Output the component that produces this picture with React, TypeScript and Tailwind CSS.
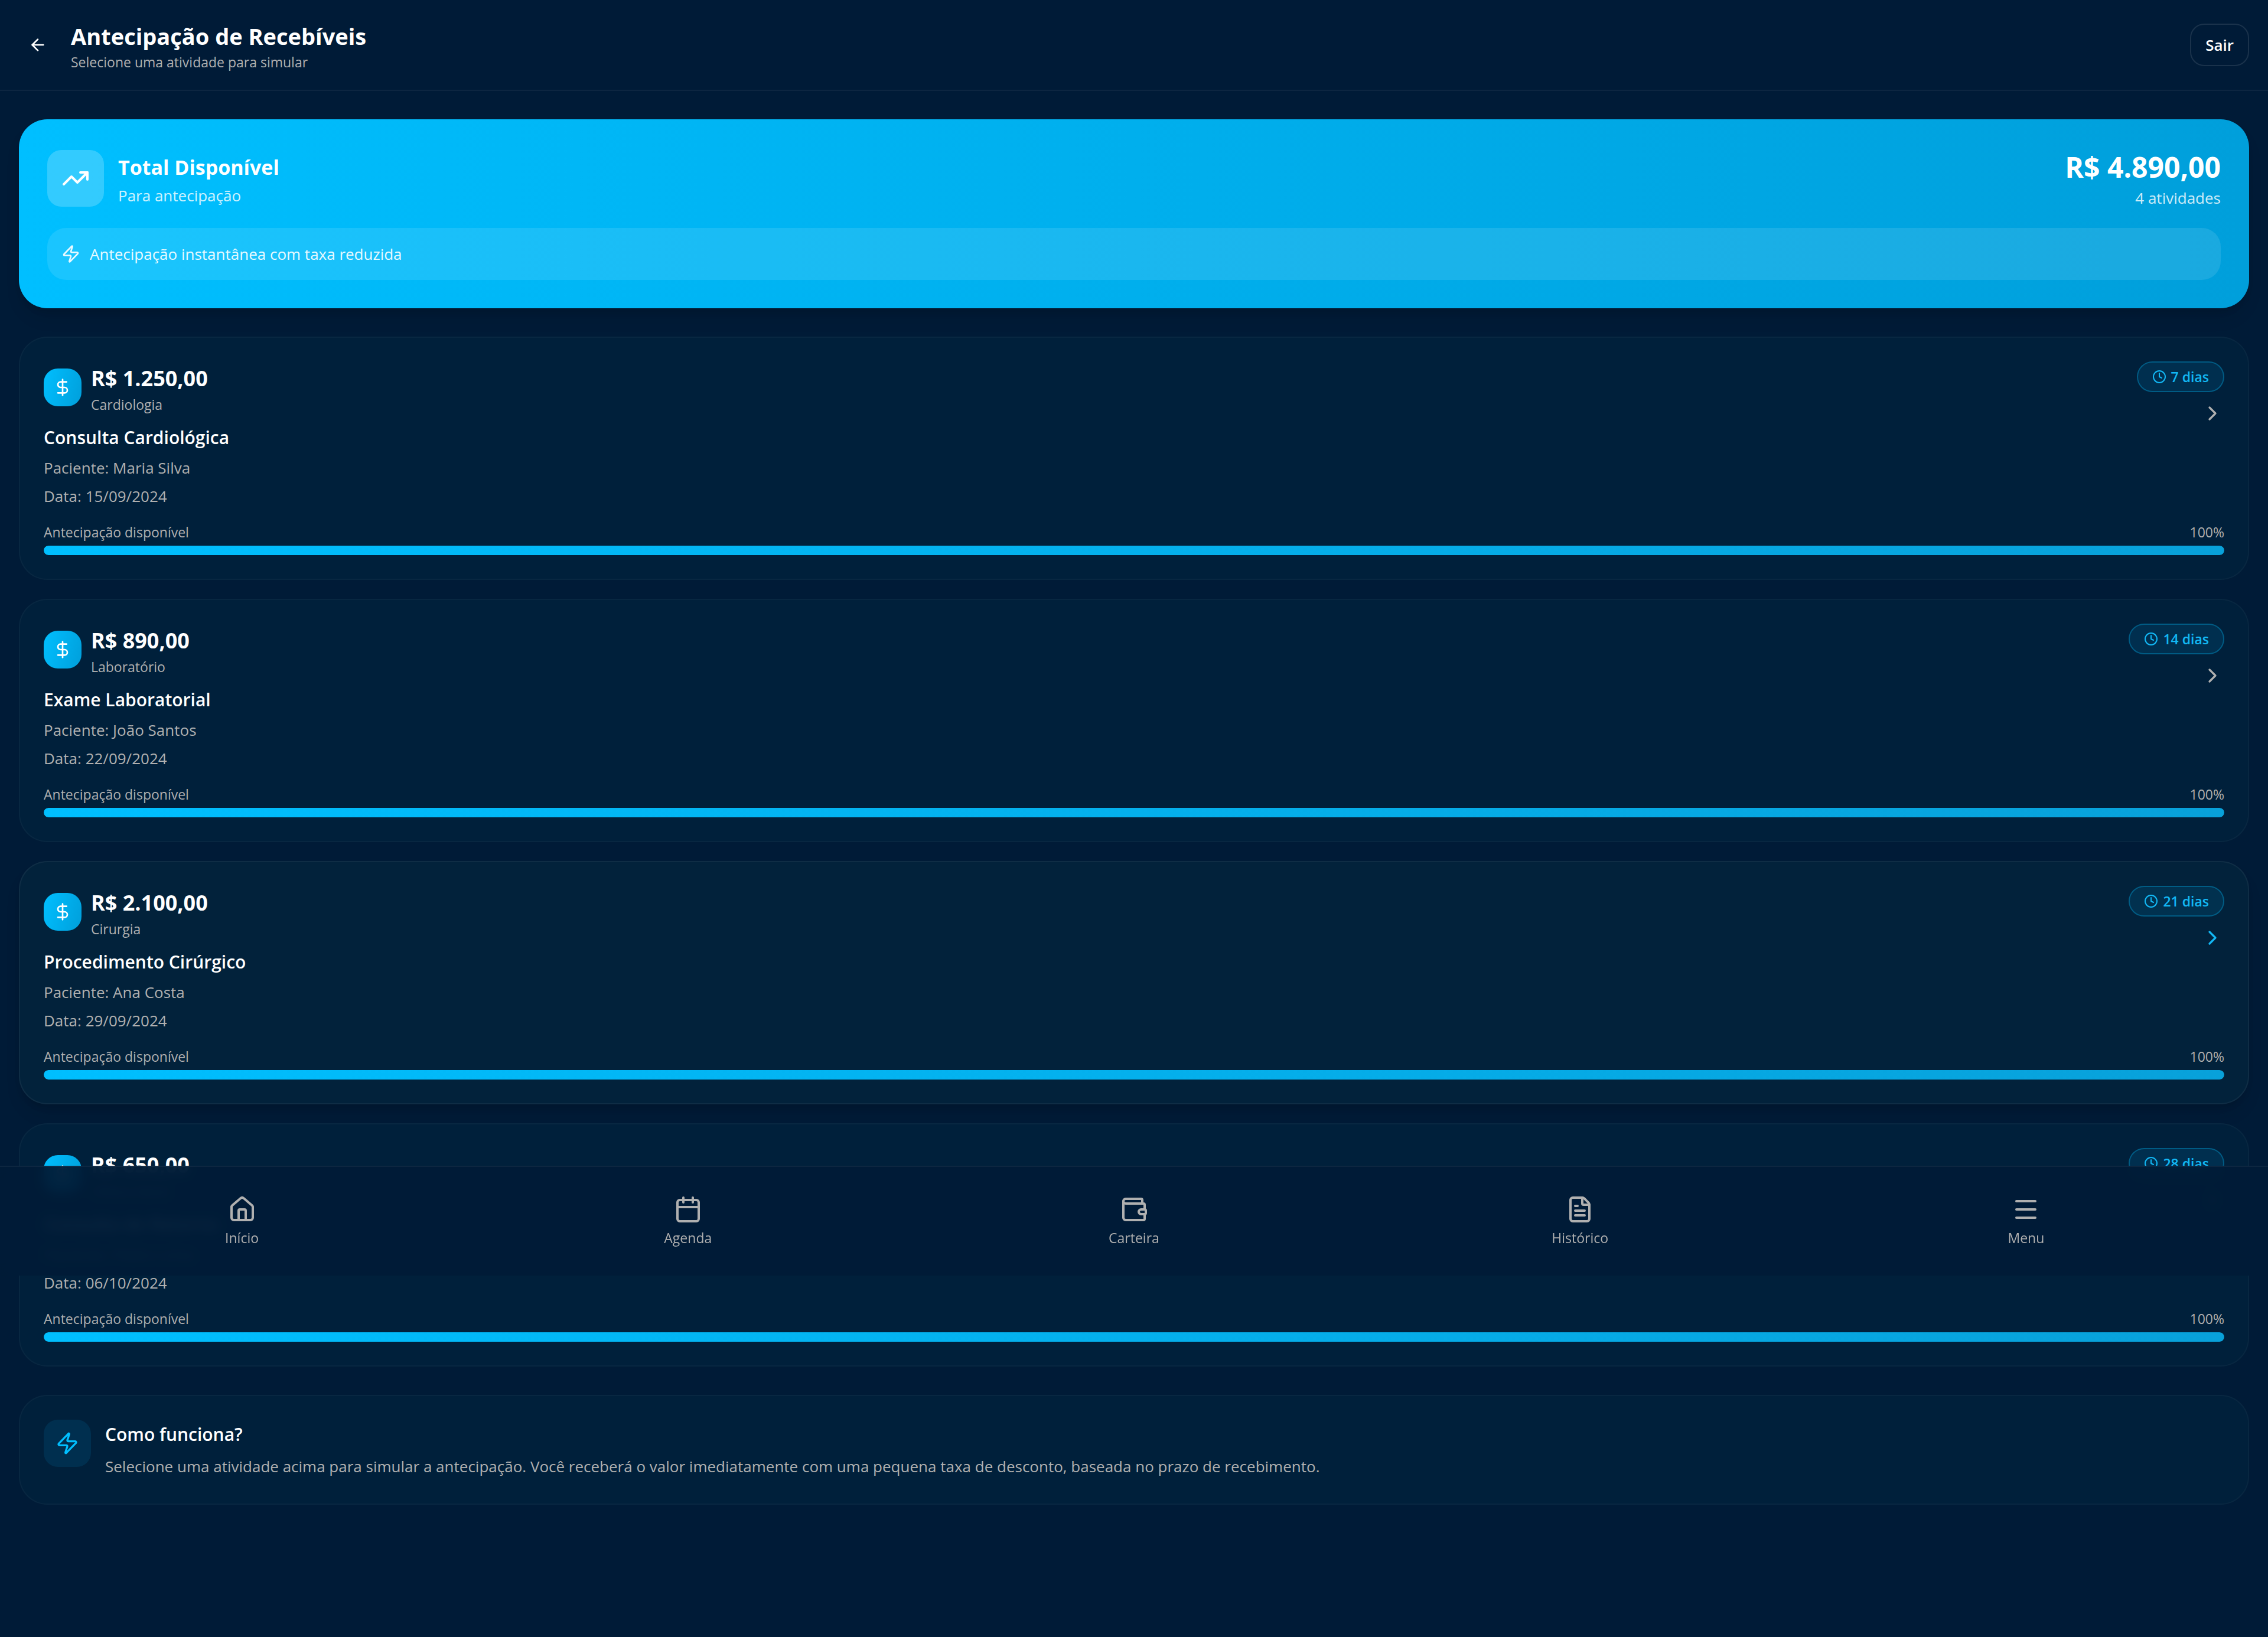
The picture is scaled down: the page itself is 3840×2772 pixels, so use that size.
import {
  ArrowLeft,
  Calendar,
  ChevronRight,
  Clock,
  DollarSign,
  FileText,
  House,
  Menu,
  TrendingUp,
  Wallet,
  Zap,
  type LucideIcon,
} from "lucide-react";

type Activity = {
  amount: string;
  area: string;
  title: string;
  patient: string;
  date: string;
  days: number;
  available: number;
  active?: boolean;
};

const activities: Activity[] = [
  { amount: "R$ 1.250,00", area: "Cardiologia", title: "Consulta Cardiológica", patient: "Maria Silva", date: "15/09/2024", days: 7, available: 100 },
  { amount: "R$ 890,00", area: "Laboratório", title: "Exame Laboratorial", patient: "João Santos", date: "22/09/2024", days: 14, available: 100 },
  { amount: "R$ 2.100,00", area: "Cirurgia", title: "Procedimento Cirúrgico", patient: "Ana Costa", date: "29/09/2024", days: 21, available: 100, active: true },
  { amount: "R$ 650,00", area: "Clínica Geral", title: "Consulta de Retorno", patient: "Pedro Lima", date: "06/10/2024", days: 28, available: 100 },
];

const navItems: { label: string; Icon: LucideIcon }[] = [
  { label: "Início", Icon: House },
  { label: "Agenda", Icon: Calendar },
  { label: "Carteira", Icon: Wallet },
  { label: "Histórico", Icon: FileText },
  { label: "Menu", Icon: Menu },
];

function Header() {
  return (
    <header className="flex items-center justify-between border-b-2 border-white/5 p-8">
      <div className="flex items-center gap-6">
        <button type="button" aria-label="Voltar" className="flex size-16 items-center justify-center rounded-3xl text-white">
          <ArrowLeft className="size-8" />
        </button>
        <div>
          <h1 className="text-[38px] leading-[58px] font-bold text-white">Antecipação de Recebíveis</h1>
          <p className="text-[23px] leading-[30px] text-[#b0b0b0]">Selecione uma atividade para simular</p>
        </div>
      </div>
      <button type="button" className="h-[72px] rounded-3xl border-2 border-white/10 px-6 text-[26px] leading-[40px] font-semibold text-white">
        Sair
      </button>
    </header>
  );
}

function Summary() {
  return (
    <section className="rounded-[48px] bg-[linear-gradient(90deg,#00bfff_0%,#009fdb_100%)] p-12 text-white shadow-[0_20px_30px_-6px_rgba(0,0,0,0.1),0_8px_12px_-4px_rgba(0,0,0,0.1)]">
      <div className="mb-8 flex items-center justify-between">
        <div className="flex items-center gap-6">
          <div className="flex size-24 items-center justify-center rounded-3xl bg-white/20">
            <TrendingUp className="size-12" />
          </div>
          <div>
            <h2 className="text-[34px] leading-[58px] font-bold">Total Disponível</h2>
            <p className="text-[26px] leading-[38px] text-white/80">Para antecipação</p>
          </div>
        </div>
        <div className="text-right">
          <p className="text-[48px] leading-[66px] font-bold">R$ 4.890,00</p>
          <p className="text-[26px] leading-[38px] text-white/80">4 atividades</p>
        </div>
      </div>
      <div className="flex items-center gap-4 rounded-[32px] bg-white/10 p-6 text-white/90">
        <Zap className="size-8" />
        <p className="text-[26px] leading-[40px]">Antecipação instantânea com taxa reduzida</p>
      </div>
    </section>
  );
}

function ActivityCard({ activity }: { activity: Activity }) {
  const { amount, area, title, patient, date, days, available, active } = activity;
  return (
    <li
      className={
        active
          ? "rounded-[48px] border-2 border-white/5 bg-[#02223b] p-10 shadow-[0_20px_30px_-6px_rgba(0,0,0,0.1),0_8px_12px_-4px_rgba(0,0,0,0.1)]"
          : "rounded-[48px] border-2 border-white/[0.03] bg-[#00203b] p-10"
      }
    >
      <div className="flex items-start justify-between">
        <div>
          <div className="mb-4 flex items-center gap-4">
            <div className="flex size-16 items-center justify-center rounded-3xl bg-[linear-gradient(105deg,#00bfff_0%,#009fdb_100%)] text-white">
              <DollarSign className="size-8" />
            </div>
            <div>
              <p className="text-[36px] leading-[58px] font-bold text-white">{amount}</p>
              <p className="text-[23px] leading-[30px] text-[#b0b0b0]">{area}</p>
            </div>
          </div>
          <h3 className="mb-1.5 text-[30px] leading-[50px] font-semibold text-white">{title}</h3>
          <div className="space-y-2 text-[26px] leading-[40px] text-[#b0b0b0]">
            <p>Paciente: {patient}</p>
            <p>Data: {date}</p>
          </div>
        </div>
        <div className="flex flex-col items-end gap-4">
          <span className="flex items-center gap-2 rounded-full border-2 border-[#00bfff]/30 bg-[#00bfff]/10 px-6 py-2 text-[23px] leading-[32px] font-semibold text-[#12b8f5]">
            <Clock className="size-6" />
            {days} dias
          </span>
          <ChevronRight className={active ? "size-10 text-[#12b8f5]" : "size-10 text-[#b0b0b0]"} />
        </div>
      </div>
      <div className="mt-6 mb-1.5 flex justify-between text-[23px] leading-[34px] text-[#b0b0b0]">
        <span>Antecipação disponível</span>
        <span>{available}%</span>
      </div>
      <div className="h-4 overflow-hidden rounded-full bg-white/5">
        <div
          className="h-full rounded-full bg-[linear-gradient(90deg,#00bfff_0%,#08a1da_100%)]"
          style={{ width: `${available}%` }}
        />
      </div>
    </li>
  );
}

function HowItWorks() {
  return (
    <section className="flex items-start gap-6 rounded-[48px] border-2 border-white/[0.03] bg-[#00203b] p-10">
      <div className="flex size-20 items-center justify-center rounded-3xl bg-[#00bfff]/10 text-[#00bfff]">
        <Zap className="size-10" />
      </div>
      <div>
        <h3 className="mb-1.5 text-[30px] leading-[50px] font-semibold text-white">Como funciona?</h3>
        <p className="text-[26px] leading-[46px] text-[#b0b0b0]">
          Selecione uma atividade acima para simular a antecipação. Você receberá o valor imediatamente com uma pequena
          taxa de desconto, baseada no prazo de recebimento.
        </p>
      </div>
    </section>
  );
}

function BottomNav() {
  return (
    <nav className="absolute inset-x-0 top-[1974px] grid grid-cols-5 border-t-2 border-white/5 bg-[#001b37]/95 px-8 py-6 backdrop-blur-[10px]">
      {navItems.map(({ label, Icon }) => (
        <a key={label} href="#" className="flex flex-col items-center gap-2 py-6 text-[23px] leading-[32px] text-[#b0b0b0]">
          <Icon className="size-12" />
          {label}
        </a>
      ))}
    </nav>
  );
}

export default function App() {
  return (
    <div className="relative min-h-screen bg-[#001b37] font-['Open_Sans',sans-serif]">
      <Header />
      <main className="flex flex-col gap-12 px-8 pt-12 pb-48">
        <Summary />
        <ul className="flex flex-col gap-8">
          {activities.map((activity) => (
            <ActivityCard key={activity.title} activity={activity} />
          ))}
        </ul>
        <HowItWorks />
      </main>
      <BottomNav />
    </div>
  );
}
